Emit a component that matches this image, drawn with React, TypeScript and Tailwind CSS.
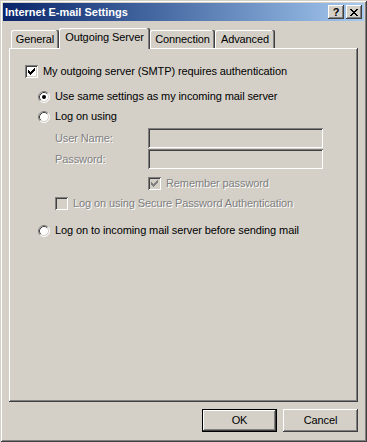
import React from "react";

const CHECK = ["......X", ".....XX", "X...XXX", "XX.XXX.", "XXXXX..", ".XXX...", "..X...."];
const CLOSE = ["XX....XX", ".XX..XX.", "..XXXX..", "...XX...", "..XXXX..", ".XX..XX.", "XX....XX"];

function Pixels({ rows, color }: { rows: string[]; color: string }) {
  const w = rows[0].length;
  const h = rows.length;
  return (
    <svg width={w} height={h} viewBox={`0 0 ${w} ${h}`} shapeRendering="crispEdges" className="block">
      {rows.flatMap((r, y) =>
        r.split("").map((c, x) => (c === "X" ? <rect key={`${x}-${y}`} x={x} y={y} width="1" height="1" fill={color} /> : null))
      )}
    </svg>
  );
}

function Checkbox({ checked, disabled }: { checked?: boolean; disabled?: boolean }) {
  return (
    <span
      className={`relative block w-[13px] h-[13px] shrink-0 ${
        disabled ? "bg-[#d4d0c8]" : "bg-white"
      } shadow-[inset_1px_1px_0_#808080,inset_-1px_-1px_0_#fff,inset_2px_2px_0_#404040,inset_-2px_-2px_0_#d4d0c8]`}
    >
      {checked && (
        <span className="absolute left-[3px] top-[3px]">
          <Pixels rows={CHECK} color={disabled ? "#808080" : "#000"} />
        </span>
      )}
    </span>
  );
}

function Radio({ checked }: { checked?: boolean }) {
  return (
    <svg width="12" height="12" viewBox="0 0 12 12" className="block shrink-0">
      <circle cx="6" cy="6" r="5" fill="#fff" />
      <path d="M2.11 9.89 A5.5 5.5 0 0 1 9.89 2.11" stroke="#808080" fill="none" />
      <path d="M9.89 2.11 A5.5 5.5 0 0 1 2.11 9.89" stroke="#fff" fill="none" />
      <path d="M2.82 9.18 A4.5 4.5 0 0 1 9.18 2.82" stroke="#404040" fill="none" />
      <path d="M9.18 2.82 A4.5 4.5 0 0 1 2.82 9.18" stroke="#d4d0c8" fill="none" />
      {checked && <circle cx="6" cy="6" r="2" fill="#000" />}
    </svg>
  );
}

const disabledText = "text-[#808080] [text-shadow:1px_1px_0_#fff]";
const sunken =
  "shadow-[inset_1px_1px_0_#808080,inset_-1px_-1px_0_#fff,inset_2px_2px_0_#404040,inset_-2px_-2px_0_#d4d0c8]";
const raised =
  "shadow-[inset_-1px_-1px_0_#404040,inset_1px_1px_0_#fff,inset_-2px_-2px_0_#808080]";

function Tab({ label, width, selected }: { label: string; width: number; selected?: boolean }) {
  return (
    <div
      style={{ width }}
      className={`flex items-center justify-center rounded-t-[2px] bg-[#d4d0c8] shadow-[inset_-1px_0_0_#404040,inset_-2px_0_0_#808080,inset_1px_1px_0_#fff] ${
        selected ? "relative z-10 h-[21px] mb-[-1px] pb-[2px]" : "h-[18px]"
      }`}
    >
      {label}
    </div>
  );
}

export default function App() {
  return (
    <div className="w-[367px] h-[442px] bg-[#d4d0c8] p-[3px] flex flex-col font-['Liberation_Sans',Arial,sans-serif] text-[11px] leading-none text-black shadow-[inset_1px_1px_0_#d4d0c8,inset_-1px_-1px_0_#404040,inset_2px_2px_0_#fff,inset_-2px_-2px_0_#808080]">
      {/* title bar */}
      <div className="h-[18px] shrink-0 flex items-center pl-[2px] pr-[2px] bg-gradient-to-r from-[#0a246a] to-[#a6caf0]">
        <span className="text-white font-bold flex-1">Internet E-mail Settings</span>
        <div className="flex gap-[2px]">
          <div className="w-[16px] h-[14px] bg-[#d4d0c8] flex items-center justify-center font-bold text-[11px] pt-[1px] shadow-[inset_-1px_-1px_0_#404040,inset_1px_1px_0_#fff,inset_-2px_-2px_0_#808080]">
            ?
          </div>
          <div className="w-[16px] h-[14px] bg-[#d4d0c8] flex items-center justify-center shadow-[inset_-1px_-1px_0_#404040,inset_1px_1px_0_#fff,inset_-2px_-2px_0_#808080]">
            <Pixels rows={CLOSE} color="#000" />
          </div>
        </div>
      </div>

      {/* body */}
      <div className="flex-1 flex flex-col px-[6px] pt-[7px] pb-[7px] tracking-[-0.1px]">
        <div className="flex items-end h-[20px] pl-[2px]">
          <Tab label="General" width={48} />
          <Tab label="Outgoing Server" width={91} selected />
          <Tab label="Connection" width={65} />
          <Tab label="Advanced" width={60} />
        </div>
        <div className={`h-[354px] ${raised} pl-[16px] pt-[17px] flex flex-col`}>
          <div className="flex items-center gap-[5px] h-[13px]">
            <Checkbox checked />
            <span>My outgoing server (SMTP) requires authentication</span>
          </div>
          <div className="pl-[13px] flex flex-col">
            <div className="flex items-center gap-[5px] h-[13px] mt-[12px]">
              <Radio checked />
              <span>Use same settings as my incoming mail server</span>
            </div>
            <div className="flex items-center gap-[5px] h-[13px] mt-[7px]">
              <Radio />
              <span>Log on using</span>
            </div>
            <div className="pl-[17px] flex flex-col">
              <div className="flex items-center h-[20px] mt-[5px]">
                <span className={`w-[93px] ${disabledText}`}>User Name:</span>
                <div className={`w-[175px] h-[20px] bg-[#d4d0c8] ${sunken}`} />
              </div>
              <div className="flex items-center h-[20px] mt-[1px]">
                <span className={`w-[93px] ${disabledText}`}>Password:</span>
                <div className={`w-[175px] h-[20px] bg-[#d4d0c8] ${sunken}`} />
              </div>
              <div className="flex items-center gap-[5px] h-[13px] mt-[8px] pl-[93px]">
                <Checkbox checked disabled />
                <span className={disabledText}>Remember password</span>
              </div>
              <div className="flex items-center gap-[5px] h-[13px] mt-[7px]">
                <Checkbox disabled />
                <span className={disabledText}>Log on using Secure Password Authentication</span>
              </div>
            </div>
            <div className="flex items-center gap-[5px] h-[13px] mt-[14px]">
              <Radio />
              <span>Log on to incoming mail server before sending mail</span>
            </div>
          </div>
        </div>
        <div className="flex justify-end gap-[6px] mt-[7px]">
          <div className="w-[75px] h-[23px] border border-black flex items-center justify-center bg-[#d4d0c8] shadow-[inset_-1px_-1px_0_#404040,inset_1px_1px_0_#fff,inset_-2px_-2px_0_#808080]">
            OK
          </div>
          <div className="w-[75px] h-[23px] flex items-center justify-center bg-[#d4d0c8] shadow-[inset_-1px_-1px_0_#404040,inset_1px_1px_0_#fff,inset_-2px_-2px_0_#808080]">
            Cancel
          </div>
        </div>
      </div>
    </div>
  );
}
